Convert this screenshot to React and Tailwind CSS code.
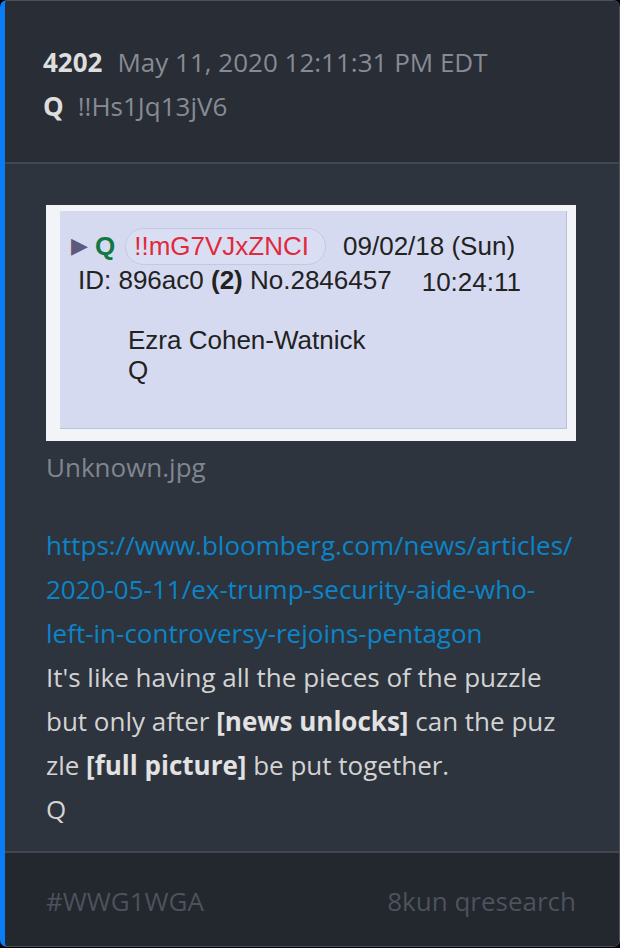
import React from 'react';

const SANS = { fontFamily: '"Open Sans", "Noto Sans", sans-serif' };
const ARIAL = { fontFamily: '"Liberation Sans", Arial, sans-serif' };

const Captura = () => (
  <div className="w-[530px] h-[236px] bg-[#f3f4f8] pl-[14px] pr-[9px] pt-[6px] pb-[12px]">
    <div className="h-full bg-[#d6daf0] border-r border-b border-[#b7c5d9] pt-[18px] text-[26px] text-[#222]" style={ARIAL}>
      <div className="flex items-center h-[34px] pl-[11px]">
        <span className="text-[#5b5a7a] text-[22px] mr-[7px]">▶</span>
        <span className="text-[#117743] font-bold">Q</span>
        <span className="ml-[10px] h-[37px] flex items-center pl-[8px] pr-[16px] rounded-full border border-[#c3c8e6] bg-[#dadef3] text-[#e2283b]">
          !!mG7VJxZNCI
        </span>
        <span className="ml-[17px]">09/02/18 (Sun)</span>
      </div>
      <div className="flex h-[34px] leading-[34px] pl-[18px]">
        <span>ID: 896ac0 <b>(2)</b> No.2846457</span>
        <span className="ml-[30px] mt-[2px]">10:24:11</span>
      </div>
      <div className="pl-[68px] mt-[28px] leading-[30px]">
        <div>Ezra Cohen-Watnick</div>
        <div>Q</div>
      </div>
    </div>
  </div>
);

export default function App() {
  return (
    <div className="min-h-screen bg-black" style={SANS}>
      <div className="w-[620px] h-[947px] flex flex-col rounded-[7px] border border-[#4b505a] border-l-[5px] border-l-[#0a7cf6] overflow-hidden">
        {/* cabecera */}
        <div className="h-[161px] bg-[#292d36] pl-[38px] pt-[39px] text-[26px] leading-[44px]">
          <div>
            <span className="font-bold text-[#dedede]">4202</span>
            <span className="ml-[15px] text-[#868b95]">May 11, 2020 12:11:31 PM EDT</span>
          </div>
          <div>
            <span className="font-bold text-[#dedede]">Q</span>
            <span className="ml-[14px] text-[#868b95]">!!Hs1Jq13jV6</span>
          </div>
        </div>
        <div className="h-[2px] bg-[#41464f]" />

        {/* cuerpo */}
        <div className="flex-1 bg-[#2e343e] pl-[41px] pt-[41px] text-[26px] leading-[44px]">
          <Captura />
          <div className="mt-[4px] text-[#80858f]">Unknown.jpg</div>
          <div className="mt-[34px] text-[#0b84c8]">
            https://www.bloomberg.com/news/articles/<br />
            2020-05-11/ex-trump-security-aide-who-<br />
            left-in-controversy-rejoins-pentagon
          </div>
          <div className="text-[#d3d3d3]">
            It's like having all the pieces of the puzzle<br />
            but only after <b className="text-[#e2e2e2]">[news unlocks]</b> can the puz<br />
            zle <b className="text-[#e2e2e2]">[full picture]</b> be put together.<br />
            Q
          </div>
        </div>
        <div className="h-[2px] bg-[#41464f]" />

        {/* pie */}
        <div className="h-[93px] bg-[#23272e] flex justify-between items-center pl-[41px] pr-[43px] pt-[3px] text-[26px] text-[#4d525c]">
          <span>#WWG1WGA</span>
          <span>8kun qresearch</span>
        </div>
      </div>
    </div>
  );
}
